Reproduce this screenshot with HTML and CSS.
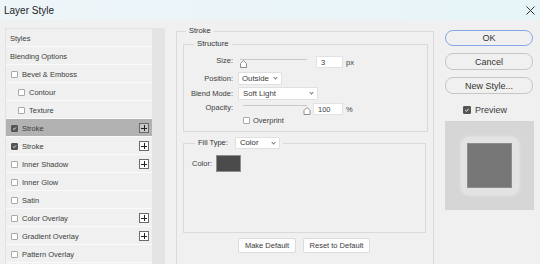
FILE: index.html
```html
<!DOCTYPE html>
<html>
<head>
<meta charset="utf-8">
<link rel="stylesheet" href="styles.css">
</head>
<body>
<div class="titlebar">
  <span class="title">Layer Style</span>
  <svg class="close" width="9" height="9" viewBox="0 0 9 9"><path d="M0.5 0.5L8.5 8.5M8.5 0.5L0.5 8.5" stroke="#333" stroke-width="1"/></svg>
</div>
<div class="dialog">
  <div class="sidebar">
    <ul class="list">
      <li class="row">Styles</li>
      <li class="row">Blending Options</li>
      <li class="row"><span class="cb"></span>Bevel &amp; Emboss</li>
      <li class="row sub"><span class="cb"></span>Contour</li>
      <li class="row sub"><span class="cb"></span>Texture</li>
      <li class="row sel"><span class="cb on"><svg viewBox="0 0 7 7"><path d="M1.5 3.6L3 5L5.6 2" fill="none" stroke="#fff" stroke-width="1.1"/></svg></span>Stroke<span class="plus"></span></li>
      <li class="row"><span class="cb on"><svg viewBox="0 0 7 7"><path d="M1.5 3.6L3 5L5.6 2" fill="none" stroke="#fff" stroke-width="1.1"/></svg></span>Stroke<span class="plus"></span></li>
      <li class="row"><span class="cb"></span>Inner Shadow<span class="plus"></span></li>
      <li class="row"><span class="cb"></span>Inner Glow</li>
      <li class="row"><span class="cb"></span>Satin</li>
      <li class="row"><span class="cb"></span>Color Overlay<span class="plus"></span></li>
      <li class="row"><span class="cb"></span>Gradient Overlay<span class="plus"></span></li>
      <li class="row"><span class="cb"></span>Pattern Overlay</li>
    </ul>
    <div class="scroll"></div>
  </div>

  <div class="middle">
    <fieldset class="group outer">
      <legend>Stroke</legend>
      <fieldset class="group structure">
        <legend>Structure</legend>
        <div class="rows">
          <div class="frow r-size">
            <span class="lbl">Size:</span>
            <div class="ctl">
              <svg class="slider s1" width="74" height="12" viewBox="0 0 74 12"><line x1="2" y1="3.5" x2="69" y2="3.5" stroke="#c9c9c9"/><path d="M2.5 11.5V7.5L5.5 4.5L8.5 7.5V11.5Z" fill="#fff" stroke="#8c8c8c"/></svg>
              <span class="input i1">3</span>
              <span class="unit">px</span>
            </div>
          </div>
          <div class="frow r-pos">
            <span class="lbl">Position:</span>
            <div class="ctl"><span class="select w-out">Outside<i class="chev"></i></span></div>
          </div>
          <div class="frow r-blend">
            <span class="lbl">Blend Mode:</span>
            <div class="ctl"><span class="select w-blend">Soft Light<i class="chev"></i></span></div>
          </div>
          <div class="frow r-op">
            <span class="lbl">Opacity:</span>
            <div class="ctl">
              <svg class="slider s2" width="75" height="12" viewBox="0 0 75 12"><line x1="5" y1="2.5" x2="69" y2="2.5" stroke="#c9c9c9"/><path d="M66 11.5V7.5L69 4.5L72 7.5V11.5Z" fill="#fff" stroke="#8c8c8c"/></svg>
              <span class="input i2">100</span>
              <span class="unit">%</span>
            </div>
          </div>
          <div class="frow r-over">
            <span class="lbl"></span>
            <div class="ctl over"><span class="cb"></span>Overprint</div>
          </div>
        </div>
      </fieldset>
      <fieldset class="group fill">
        <legend><span class="fl">Fill Type:</span><span class="select w-color">Color<i class="chev"></i></span></legend>
        <div class="colorrow"><span class="clbl">Color:</span><span class="swatch"></span></div>
      </fieldset>
      <div class="btnrow">
        <span class="btn b-make">Make Default</span>
        <span class="btn b-reset">Reset to Default</span>
      </div>
    </fieldset>
  </div>

  <div class="right">
    <span class="rbtn ok">OK</span>
    <span class="rbtn">Cancel</span>
    <span class="rbtn">New Style...</span>
    <div class="preview-cb"><span class="cb on big"><svg viewBox="0 0 7 7"><path d="M1.5 3.6L3 5L5.6 2" fill="none" stroke="#fff" stroke-width="1.1"/></svg></span>Preview</div>
    <div class="preview">
      <div class="glow"><div class="square"></div></div>
    </div>
  </div>
</div>
</body>
</html>
```

FILE: styles.css
```css
* { box-sizing: border-box; }
html, body { margin: 0; padding: 0; }
body {
  width: 540px;
  height: 264px;
  overflow: hidden;
  background: #f0f0f0;
  font-family: "Liberation Sans", Arial, sans-serif;
  color: #3c3c3c;
  font-size: 7.5px;
}
.titlebar {
  height: 20px;
  display: flex;
  align-items: center;
  justify-content: space-between;
  padding: 0 5px 0 4px;
  background: linear-gradient(90deg, #eef5f9, #e6f4f7);
}
.title { font-size: 10px; color: #222; }
.close { display: block; }

.dialog { display: flex; height: 244px; }

.sidebar { display: flex; margin: 8px 0 0 5px; }
.list {
  list-style: none;
  margin: 0;
  padding: 0;
  width: 147px;
  border-top: 1px solid #e2e2e2;
  border-left: 1px solid #e2e2e2;
}
.row {
  height: 18px;
  display: flex;
  align-items: center;
  padding-left: 4px;
  padding-top: 1px;
  border-bottom: 1px solid #fafafa;
  position: relative;
}
.row .cb { margin: 0 4px 0 1px; }
.row.sub { padding-left: 11px; }
.row.sel { background: #b2b2b2; }
.cb {
  width: 7px;
  height: 7px;
  border: 1px solid #a8a8a8;
  border-radius: 1px;
  background: #fff;
  display: inline-block;
  flex: none;
}
.cb.on { background: #555; border-color: #555; }
.cb svg { display: block; width: 5px; height: 5px; }
.cb.big { width: 8px; height: 8px; }
.cb.big svg { width: 6px; height: 6px; }
.plus {
  margin-left: auto;
  margin-right: 3px;
  width: 10px;
  height: 10px;
  border: 1px solid #6a6a6a;
  background:
    linear-gradient(#222, #222) center / 6px 1px no-repeat,
    linear-gradient(#222, #222) center / 1px 6px no-repeat,
    #fff;
}
.row.sel .plus { background:
    linear-gradient(#222, #222) center / 6px 1px no-repeat,
    linear-gradient(#222, #222) center / 1px 6px no-repeat,
    #c8c8c8; }
.scroll { width: 13px; background: #e4e4e4; }

.middle { margin: 6px 0 0 11px; width: 258px; }
.group {
  margin: 0;
  padding: 0;
  border: 1px solid #dadada;
  min-width: 0;
}
.group legend {
  padding: 0 3px;
  line-height: 10px;
  color: #333;
}
.outer { height: 250px; border-bottom: none; }
.outer > legend { margin-left: 9px; }
.structure { margin: 3px 5px 0 6px; }
.structure > legend { margin-left: 10px; font-size: 7.8px; }
.rows { display: flex; flex-direction: column; padding: 7px 0 6px; }
.frow { display: flex; align-items: center; }
.lbl { width: 49px; text-align: right; margin-right: 5px; flex: none; }
.ctl { display: flex; align-items: center; }
.r-size { height: 12px; }
.r-pos { height: 13px; margin-top: 4px; }
.r-blend { height: 13px; margin-top: 2px; }
.r-op { height: 12px; margin-top: 3px; }
.r-over { height: 9px; margin-top: 1px; }
.r-size .lbl, .r-op .lbl { align-self: flex-start; }
.slider { display: block; }
.input {
  height: 12px;
  background: #fff;
  border: 1px solid #e2e2e2;
  padding-left: 4px;
  display: flex;
  align-items: center;
}
.i1 { width: 27px; margin-left: 4px; }
.i2 { width: 30px; margin-left: 0; }
.unit { margin-left: 3px; }
.select {
  height: 13px;
  background: #fff;
  border: 1px solid #e0e0e0;
  border-radius: 1px;
  display: flex;
  align-items: center;
  padding-left: 4px;
  position: relative;
  font-size: 7.8px;
}
.chev {
  position: absolute;
  right: 4px;
  top: 3px;
  width: 3px;
  height: 3px;
  border-right: 1px solid #777;
  border-bottom: 1px solid #777;
  transform: rotate(45deg);
}
.w-out { width: 44px; padding-left: 3px; }
.w-blend { width: 80px; }
.w-color { width: 45px; height: 12px; }
.over { margin-left: 5px; }
.over .cb { margin-right: 3px; }

.fill { margin: 5px 7px 0 6px; height: 96px; }
.fill > legend { margin-left: 11px; display: flex; align-items: center; padding: 0 3px; }
.fl { margin-right: 7px; }
.colorrow { display: flex; align-items: flex-start; padding: 6px 0 0 8px; }
.clbl { margin-top: 4px; margin-right: 4px; }
.swatch { width: 25px; height: 17px; background: #4b4b4b; border: 1px solid #8e8e8e; }

.btnrow { display: flex; justify-content: center; gap: 7px; margin-top: 5px; padding-right: 2px; }
.btn {
  height: 15px;
  background: #fdfdfd;
  border: 1px solid #dcdcdc;
  border-radius: 2px;
  display: flex;
  align-items: center;
  justify-content: center;
}
.b-make { width: 58px; }
.b-reset { width: 67px; }

.right { margin: 10px 0 0 11px; width: 89px; display: flex; flex-direction: column; }
.rbtn {
  height: 17px;
  width: 88px;
  border: 1px solid #c6c6c6;
  border-radius: 8px;
  display: flex;
  align-items: center;
  justify-content: center;
  font-size: 9px;
  color: #333;
  margin-bottom: 7px;
}
.rbtn.ok { border-color: #86a8e6; height: 16px; }
.preview-cb { display: flex; align-items: center; margin: 5px 0 0 18px; height: 8px; font-size: 9px; }
.preview-cb .cb { margin-right: 4px; }
.preview {
  margin-top: 7px;
  width: 89px;
  height: 89px;
  background: #d6d6d6;
  display: flex;
  align-items: center;
  justify-content: center;
}
.glow {
  width: 58px;
  height: 58px;
  border-radius: 8px;
  background: #e3e3e3;
  box-shadow: 0 0 3px 1px #e0e0e0;
  display: flex;
  align-items: center;
  justify-content: center;
}
.square { width: 45px; height: 45px; background: #777; border: 1px solid #8d8d8d; }
```
